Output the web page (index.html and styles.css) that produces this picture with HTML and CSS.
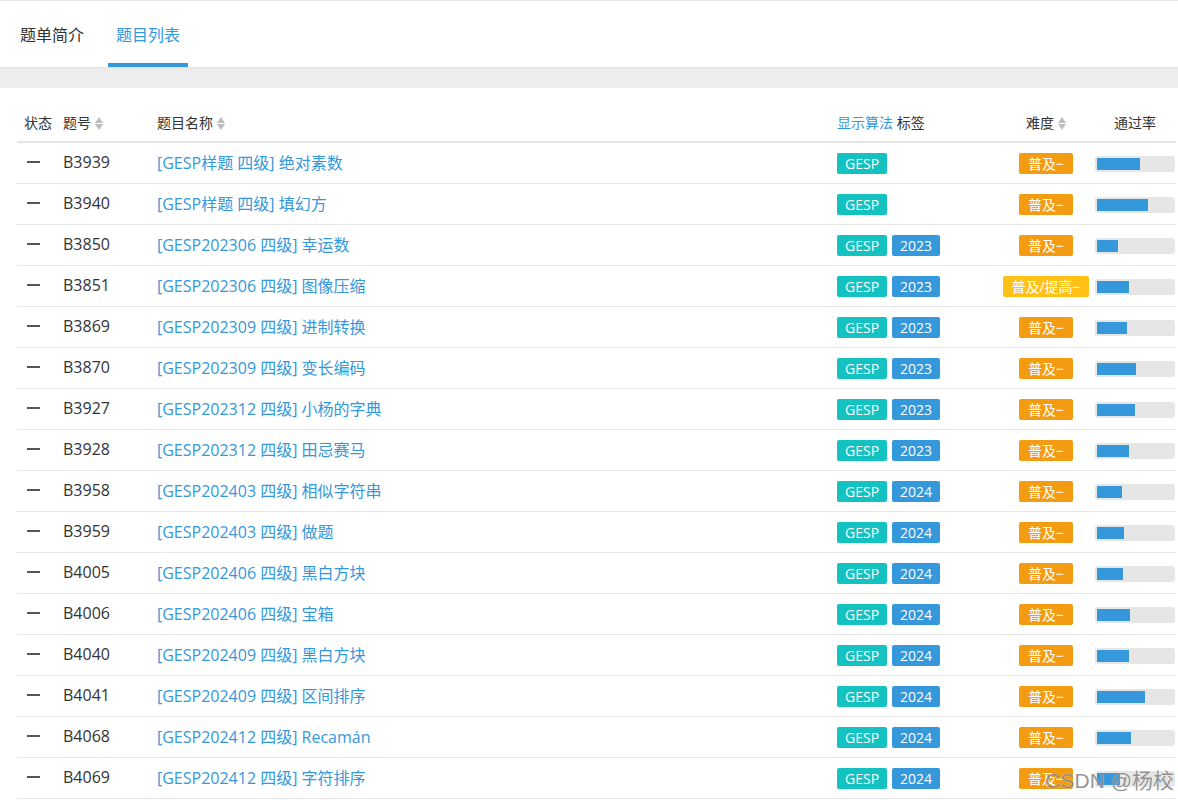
FILE: index.html
```html
<!DOCTYPE html>
<html lang="zh-CN">
<head>
<meta charset="utf-8">
<title>题目列表</title>
<link rel="stylesheet" href="styles.css">
</head>
<body>
<div class="tabs">
  <div class="tab">题单简介</div>
  <div class="tab active">题目列表</div>
</div>
<div class="band"></div>
<div class="content">
  <table class="problems">
    <colgroup>
      <col class="c-status"><col class="c-id"><col class="c-name"><col class="c-tag"><col class="c-diff"><col class="c-rate">
    </colgroup>
    <thead>
      <tr>
        <th class="left">状态</th>
        <th class="left">题号<span class="sort"></span></th>
        <th class="left">题目名称<span class="sort"></span></th>
        <th class="left"><span class="blue">显示算法</span> 标签</th>
        <th class="center diffcol">难度<span class="sort"></span></th>
        <th class="center rate">通过率</th>
      </tr>
    </thead>
    <tbody>
      <tr><td><span class="dash"></span></td><td>B3939</td><td><a>[GESP样题 四级] 绝对素数</a></td><td><span class="tag teal">GESP</span></td><td class="center diffcol"><span class="diff orange">普及−</span></td><td class="center rate"><div class="bar"><div class="fill" style="width:57%"></div></div></td></tr>
      <tr><td><span class="dash"></span></td><td>B3940</td><td><a>[GESP样题 四级] 填幻方</a></td><td><span class="tag teal">GESP</span></td><td class="center diffcol"><span class="diff orange">普及−</span></td><td class="center rate"><div class="bar"><div class="fill" style="width:67%"></div></div></td></tr>
      <tr><td><span class="dash"></span></td><td>B3850</td><td><a>[GESP202306 四级] 幸运数</a></td><td><span class="tag teal">GESP</span><span class="tag blue-bg">2023</span></td><td class="center diffcol"><span class="diff orange">普及−</span></td><td class="center rate"><div class="bar"><div class="fill" style="width:28%"></div></div></td></tr>
      <tr><td><span class="dash"></span></td><td>B3851</td><td><a>[GESP202306 四级] 图像压缩</a></td><td><span class="tag teal">GESP</span><span class="tag blue-bg">2023</span></td><td class="center diffcol"><span class="diff yellow">普及/提高−</span></td><td class="center rate"><div class="bar"><div class="fill" style="width:42%"></div></div></td></tr>
      <tr><td><span class="dash"></span></td><td>B3869</td><td><a>[GESP202309 四级] 进制转换</a></td><td><span class="tag teal">GESP</span><span class="tag blue-bg">2023</span></td><td class="center diffcol"><span class="diff orange">普及−</span></td><td class="center rate"><div class="bar"><div class="fill" style="width:39%"></div></div></td></tr>
      <tr><td><span class="dash"></span></td><td>B3870</td><td><a>[GESP202309 四级] 变长编码</a></td><td><span class="tag teal">GESP</span><span class="tag blue-bg">2023</span></td><td class="center diffcol"><span class="diff orange">普及−</span></td><td class="center rate"><div class="bar"><div class="fill" style="width:51%"></div></div></td></tr>
      <tr><td><span class="dash"></span></td><td>B3927</td><td><a>[GESP202312 四级] 小杨的字典</a></td><td><span class="tag teal">GESP</span><span class="tag blue-bg">2023</span></td><td class="center diffcol"><span class="diff orange">普及−</span></td><td class="center rate"><div class="bar"><div class="fill" style="width:50%"></div></div></td></tr>
      <tr><td><span class="dash"></span></td><td>B3928</td><td><a>[GESP202312 四级] 田忌赛马</a></td><td><span class="tag teal">GESP</span><span class="tag blue-bg">2023</span></td><td class="center diffcol"><span class="diff orange">普及−</span></td><td class="center rate"><div class="bar"><div class="fill" style="width:42%"></div></div></td></tr>
      <tr><td><span class="dash"></span></td><td>B3958</td><td><a>[GESP202403 四级] 相似字符串</a></td><td><span class="tag teal">GESP</span><span class="tag blue-bg">2024</span></td><td class="center diffcol"><span class="diff orange">普及−</span></td><td class="center rate"><div class="bar"><div class="fill" style="width:33%"></div></div></td></tr>
      <tr><td><span class="dash"></span></td><td>B3959</td><td><a>[GESP202403 四级] 做题</a></td><td><span class="tag teal">GESP</span><span class="tag blue-bg">2024</span></td><td class="center diffcol"><span class="diff orange">普及−</span></td><td class="center rate"><div class="bar"><div class="fill" style="width:36%"></div></div></td></tr>
      <tr><td><span class="dash"></span></td><td>B4005</td><td><a>[GESP202406 四级] 黑白方块</a></td><td><span class="tag teal">GESP</span><span class="tag blue-bg">2024</span></td><td class="center diffcol"><span class="diff orange">普及−</span></td><td class="center rate"><div class="bar"><div class="fill" style="width:34%"></div></div></td></tr>
      <tr><td><span class="dash"></span></td><td>B4006</td><td><a>[GESP202406 四级] 宝箱</a></td><td><span class="tag teal">GESP</span><span class="tag blue-bg">2024</span></td><td class="center diffcol"><span class="diff orange">普及−</span></td><td class="center rate"><div class="bar"><div class="fill" style="width:43%"></div></div></td></tr>
      <tr><td><span class="dash"></span></td><td>B4040</td><td><a>[GESP202409 四级] 黑白方块</a></td><td><span class="tag teal">GESP</span><span class="tag blue-bg">2024</span></td><td class="center diffcol"><span class="diff orange">普及−</span></td><td class="center rate"><div class="bar"><div class="fill" style="width:42%"></div></div></td></tr>
      <tr><td><span class="dash"></span></td><td>B4041</td><td><a>[GESP202409 四级] 区间排序</a></td><td><span class="tag teal">GESP</span><span class="tag blue-bg">2024</span></td><td class="center diffcol"><span class="diff orange">普及−</span></td><td class="center rate"><div class="bar"><div class="fill" style="width:63%"></div></div></td></tr>
      <tr><td><span class="dash"></span></td><td>B4068</td><td><a>[GESP202412 四级] Recamán</a></td><td><span class="tag teal">GESP</span><span class="tag blue-bg">2024</span></td><td class="center diffcol"><span class="diff orange">普及−</span></td><td class="center rate"><div class="bar"><div class="fill" style="width:45%"></div></div></td></tr>
      <tr><td><span class="dash"></span></td><td>B4069</td><td><a>[GESP202412 四级] 字符排序</a></td><td><span class="tag teal">GESP</span><span class="tag blue-bg">2024</span></td><td class="center diffcol"><span class="diff orange">普及−</span></td><td class="center rate"><div class="bar"><div class="fill" style="width:30%"></div></div></td></tr>
    </tbody>
  </table>
</div>
<div class="watermark">CSDN @杨校</div>
</body>
</html>
```

FILE: styles.css
```css
html, body {
  margin: 0;
  padding: 0;
  background: #fff;
}
body {
  font-family: "Open Sans", "Noto Sans CJK SC", sans-serif;
  color: #333;
  border-top: 1px solid #e6e6e6;
  position: relative;
  height: 799px;
  overflow: hidden;
}
.tabs {
  display: flex;
  gap: 16px;
  padding-left: 12px;
  height: 66px;
  background: #fff;
  position: relative;
  z-index: 1;
  box-shadow: 0 1px 3px rgba(0,0,0,0.08);
}
.tab {
  box-sizing: border-box;
  height: 66px;
  width: 80px;
  display: flex;
  align-items: center;
  justify-content: center;
  font-size: 16px;
  border-top: 4px solid transparent;
  border-bottom: 4px solid transparent;
  color: #333;
}
.tab.active {
  color: #3498db;
  border-bottom-color: #3498db;
}
.band {
  height: 21px;
  background: #eeeeee;
}
.content {
  padding: 15px 2px 0 17px;
}
.problems {
  width: 1159px;
  border-collapse: collapse;
  table-layout: fixed;
}
.c-status { width: 38px; }
.c-id { width: 94px; }
.c-name { width: 680px; }
.c-tag { width: 171px; }
.c-diff { width: 92px; }
.c-rate { width: 84px; }
th {
  font-weight: normal;
  font-size: 14px;
  height: 37px;
  padding: 0 8px 1px;
  border-bottom: 2px solid #e5e5e5;
  white-space: nowrap;
  color: #333;
}
th:first-child { padding-left: 7px; }
th.left { text-align: left; }
.center { text-align: center; }
.blue { color: #3498db; }
.sort {
  display: inline-block;
  width: 8px;
  height: 13px;
  margin-left: 4px;
  vertical-align: -2px;
  position: relative;
}
.sort::before, .sort::after {
  content: "";
  position: absolute;
  left: 0;
  border-left: 4px solid transparent;
  border-right: 4px solid transparent;
}
.sort::before {
  top: 0;
  border-bottom: 6px solid #bdbdbd;
}
.sort::after {
  bottom: 0;
  border-top: 6px solid #bdbdbd;
}
td {
  height: 38px;
  padding: 0 8px 2px;
  font-size: 16px;
  border-bottom: 1px solid #e6e6e6;
  white-space: nowrap;
  color: #333;
}
td:first-child { padding-left: 10px; }
th.diffcol, td.diffcol {
  padding-left: 0;
  padding-right: 0;
}
th.rate, td.rate {
  padding-left: 2px;
  padding-right: 0;
}
td a {
  color: #3498db;
  text-decoration: none;
}
.dash {
  display: block;
  width: 13px;
  height: 2px;
  background: #555;
}
.tag {
  display: inline-block;
  font-size: 14px;
  line-height: 21px;
  height: 21px;
  padding: 0 8px;
  border-radius: 2px;
  color: #fff;
  margin-right: 5px;
  vertical-align: middle;
}
.teal { background: #14c2c2; }
.blue-bg { background: #3498db; }
.diff {
  display: inline-block;
  font-size: 14px;
  line-height: 21px;
  height: 21px;
  padding: 0 9px;
  border-radius: 2px;
  color: #fff;
  vertical-align: middle;
}
.orange { background: #f39c11; }
.yellow { background: #ffc116; padding: 0 8px; }
.bar {
  display: inline-block;
  box-sizing: border-box;
  width: 80px;
  height: 16px;
  padding: 2px;
  background: #e6e6e6;
  border-radius: 3px;
  vertical-align: middle;
  text-align: left;
}
.fill {
  height: 12px;
  background: #3498db;
}
.watermark {
  position: absolute;
  z-index: 2;
  right: 4px;
  bottom: 6px;
  font-family: "Liberation Sans", "Noto Sans CJK SC", sans-serif;
  font-size: 21px;
  color: rgba(100,100,100,0.7);
  text-shadow: 0 0 1px rgba(255,255,255,0.8);
}
```
